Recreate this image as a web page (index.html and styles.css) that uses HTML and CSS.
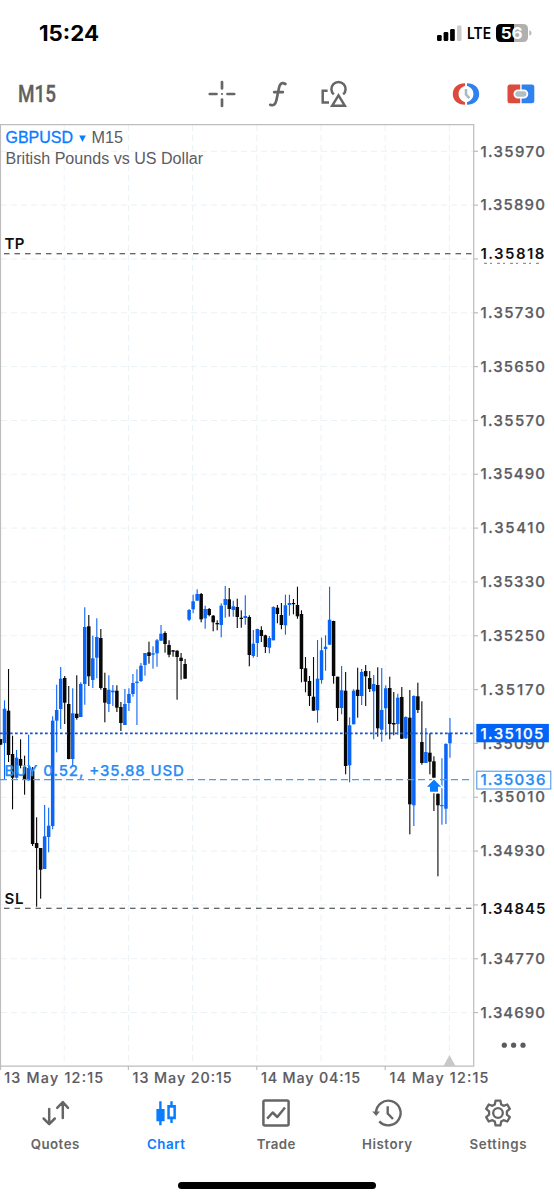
FILE: index.html
```html
<!DOCTYPE html>
<html lang="en">
<head>
<meta charset="utf-8">
<title>GBPUSD M15</title>
<link rel="stylesheet" href="styles.css">
</head>
<body>
<div class="screen">
  <header class="status">
    <svg class="clock" width="64" height="24"><text x="0" y="17.7" textLength="60" lengthAdjust="spacingAndGlyphs">15:24</text></svg>
    <div class="status-right">
      <svg width="25" height="16" viewBox="0 0 25 16">
        <rect x="0" y="10" width="4.7" height="6" rx="1.3"/>
        <rect x="6.6" y="7" width="4.7" height="9" rx="1.3"/>
        <rect x="13.1" y="4" width="4.7" height="12" rx="1.3"/>
        <rect x="20" y="0.5" width="4.5" height="15.5" rx="1.3" fill="#ccc"/>
      </svg>
      <svg class="lte" width="24" height="20"><text x="0" y="16.3" textLength="24" lengthAdjust="spacingAndGlyphs">LTE</text></svg>
      <svg class="battery" width="36" height="18" viewBox="0 0 36 18">
        <path d="M5 0H18V18H5Q0 18 0 13V5Q0 0 5 0Z"/>
        <path d="M18 0H27Q32 0 32 5V13Q32 18 27 18H18Z" fill="#b0b0b0"/>
        <path d="M33.3 6.3Q35.6 7 35.6 9T33.3 11.7Z" fill="#b8b8b8"/>
        <text x="4.7" y="15" textLength="22" lengthAdjust="spacingAndGlyphs">56</text>
      </svg>
    </div>
  </header>

  <nav class="toolbar">
    <svg class="frame" width="40" height="24"><text x="0" y="20" textLength="38" lengthAdjust="spacingAndGlyphs">M15</text></svg>
    <div class="tools">
      <svg width="28" height="28" viewBox="0 0 28 28" fill="none" stroke="#666" stroke-width="2.7" stroke-linecap="round">
        <path d="M14 2V8.5M14 19.5V26M1.8 14H8.5M19.5 14H26.2"/><circle cx="14" cy="14" r="1.1" fill="#666" stroke="none"/>
      </svg>
      <svg width="20" height="28" viewBox="0 0 20 28" fill="none" stroke="#666" stroke-width="2.7" stroke-linecap="round">
        <path d="M17.5 4C14 2.2 12 3.6 11.2 7L8.4 20.3C7.4 24.8 5.4 26 2.2 24.8M6.2 12.2H14.8"/>
      </svg>
      <svg width="28" height="28" viewBox="0 0 28 28" fill="none" stroke="#666" stroke-width="2.5">
        <path d="M7.6 10.8H2.7V22.6H9"/><path d="M13.8 14.4A7.1 7.1 0 1 1 23.2 14.4"/><path d="M18.5 15.4L24.8 25.7H12.2Z"/>
      </svg>
    </div>
    <div class="trade-buttons">
      <svg width="28" height="24" viewBox="0 0 28 24">
        <path d="M13 1.2C5.7 1.2 .8 5.7 .8 12S5.7 22.8 13 22.8V20.2C8.6 18.4 6.6 15.8 6.6 12S8.6 5.6 13 3.8Z" fill="#dc493d"/>
        <path d="M15 1.2C22.3 1.2 27.2 5.7 27.2 12S22.3 22.8 15 22.8V20.2C19.4 18.4 21.4 15.8 21.4 12S19.4 5.6 15 3.8Z" fill="#2e81ee"/>
        <path d="M14 7V12.6L17.4 16.2" fill="none" stroke="#a9b8c4" stroke-width="2.6"/>
      </svg>
      <svg width="28" height="24" viewBox="0 0 28 24">
        <path d="M3 2.5H13.2V21.3H3Q.5 21.3 .5 18.8V5Q.5 2.5 3 2.5Z" fill="#dc493d"/>
        <path d="M14.6 2.5H24.8Q27.3 2.5 27.3 5V18.8Q27.3 21.3 24.8 21.3H14.6Z" fill="#2e81ee"/>
        <rect x="7.4" y="8.4" width="13" height="7.2" rx="3.6" fill="#b0bec5" stroke="#fff" stroke-width="1.8"/>
      </svg>
    </div>
  </nav>

  <main class="chart">
    <svg id="plot" width="554" height="970" viewBox="0 120 554 970">
      <g id="grid" class="grid"></g>
      <path class="frame-line" d="M0 124.7H473.7V1066.2H0M.5 124.7V1070"/>
      <g id="ticks" class="frame-line"></g>
      <path d="M449.5 1055L455.5 1066H443.5Z" fill="#c8c8c8"/>
      <g id="candles"></g>
      <path class="level" d="M4 253.7H473M4 908.3H473"/>
      <path class="open-line" d="M0 779.7H473"/>
      <path class="bid-line" d="M0 733.4H473"/>
      <path d="M434 779.6L441 786.8H438V791.8H430V786.8H427Z" fill="#0a7cff" stroke="#fff" stroke-width="3" paint-order="stroke"/>
      <g id="labels"></g>
      <g class="price strong">
        <text x="4.4" y="249" textLength="20">TP</text>
        <text x="4.4" y="904" textLength="19">SL</text>
      </g>
      <text class="price position" x="4.4" y="775.5" textLength="179.5">BUY 0.52, +35.88 USD</text>
      <path d="M484 263.3H542" stroke="#777" stroke-width="1" stroke-dasharray="3 3 2 5"/>
      <g class="price strong">
        <text x="480.4" y="258.9" textLength="64">1.35818</text>
        <text x="480.4" y="913.5" textLength="65">1.34845</text>
      </g>
      <rect x="476.3" y="723.9" width="72.6" height="18.4" fill="#0064f8"/>
      <text class="price bid" x="480.4" y="738.8" textLength="63">1.35105</text>
      <rect x="476.8" y="771.2" width="74" height="17.8" fill="#fff" stroke="#3c91ee"/>
      <text class="price position" x="480.4" y="785.2" textLength="65">1.35036</text>
      <g fill="#5b5b62"><circle cx="504.3" cy="1045.2" r="2.6"/><circle cx="513.6" cy="1045.2" r="2.6"/><circle cx="523" cy="1045.2" r="2.6"/></g>
      <g class="title">
        <text class="symbol" x="5.5" y="143.4" textLength="67.5" lengthAdjust="spacingAndGlyphs">GBPUSD</text>
        <path d="M79.2 135.4H85.8L82.5 142Z" fill="#0a7cff"/>
        <text x="91.5" y="143.4" textLength="31.5" lengthAdjust="spacingAndGlyphs">M15</text>
        <text x="5.5" y="163.5" textLength="197.5" lengthAdjust="spacingAndGlyphs">British Pounds vs US Dollar</text>
      </g>
    </svg>
  </main>

  <footer class="tabs">
    <a class="tab">
      <svg width="28" height="28" viewBox="0 0 28 28" fill="none" stroke="#666" stroke-width="2.5" stroke-linecap="round" stroke-linejoin="round">
        <path d="M8.2 10V25M2.6 19.5L8.2 25.2L13.8 19.5M21.8 19V3.2M16.2 8.8L21.8 3L27 8.8"/>
      </svg>
      <svg class="label" width="60" height="16"><text x="30" y="12" textLength="48.5">Quotes</text></svg>
    </a>
    <a class="tab active">
      <svg width="28" height="28" viewBox="0 0 28 28" fill="#0a7cff">
        <path d="M7.2 2.3H9.6V10H12.6V22.3H9.6V26.3H7.2V22.3H4.4V10H7.2Z"/>
        <path d="M18.3 2.3H20.7V6H23.9V20.3H20.7V24H18.3V20.3H15.3V6H18.3ZM17.8 8.7V17.6H21.4V8.7Z" fill-rule="evenodd"/>
      </svg>
      <svg class="label" width="60" height="16"><text x="30" y="12" textLength="38">Chart</text></svg>
    </a>
    <a class="tab">
      <svg width="28" height="28" viewBox="0 0 28 28" fill="none" stroke="#666" stroke-width="2.5" stroke-linejoin="round">
        <rect x="1.4" y="1.4" width="25.2" height="25" rx="1.5"/><path d="M5.2 19.6L10.7 13.5L15.3 18L23 8.5"/>
      </svg>
      <svg class="label" width="60" height="16"><text x="30" y="12" textLength="38.5">Trade</text></svg>
    </a>
    <a class="tab">
      <svg width="28" height="28" viewBox="0 0 28 28" fill="none" stroke="#666" stroke-width="2.4">
        <path d="M3 14A12.3 12.3 0 1 1 6.3 22.4"/><path d="M-.8 12.4H6.9L3.2 17Z" fill="#666" stroke="none"/><path d="M14.7 7.2V14.5L20 20"/>
      </svg>
      <svg class="label" width="60" height="16"><text x="30" y="12" textLength="50">History</text></svg>
    </a>
    <a class="tab">
      <svg width="28" height="28" viewBox="0 0 28 28" fill="none" stroke="#666" stroke-width="2.3" stroke-linejoin="round">
        <path d="M11.6 1.6H16.4L17.2 5.4L19.6 6.8L23.3 5.5L25.8 9.8L22.9 12.4V15.6L25.8 18.2L23.3 22.5L19.6 21.2L17.2 22.6L16.4 26.4H11.6L10.8 22.6L8.4 21.2L4.7 22.5L2.2 18.2L5.1 15.6V12.4L2.2 9.8L4.7 5.5L8.4 6.8L10.8 5.4Z"/><circle cx="14" cy="14" r="4.8"/>
      </svg>
      <svg class="label" width="60" height="16"><text x="30" y="12" textLength="57">Settings</text></svg>
    </a>
  </footer>
  <div class="home"></div>
</div>
<script src="chart.js"></script>
</body>
</html>
```
FILE: styles.css
```css
body {
  margin: 0;
  background: #fff;
  font-family: Inter, "Noto Sans", sans-serif;
}
svg { display: block; flex: none; overflow: visible; }
.screen {
  width: 554px;
  height: 1199px;
  display: flex;
  flex-direction: column;
  overflow: hidden;
}
.status {
  height: 66px;
  box-sizing: border-box;
  padding: 23px 22px 0 38.5px;
  display: flex;
  justify-content: space-between;
}
.clock text { font-size: 21px; font-weight: 700; }
.status-right {
  height: 20px;
  display: flex;
  align-items: center;
  gap: 5px;
}
.lte text { font-size: 16.5px; font-weight: 600; }
.battery text { font-size: 16.5px; font-weight: 700; fill: #fff; }
.toolbar {
  height: 54px;
  box-sizing: border-box;
  padding: 1px 19.5px 0 18px;
  display: flex;
  align-items: center;
  justify-content: space-between;
}
.frame text { font-family: Roboto, sans-serif; font-size: 23px; font-weight: 500; fill: #606060; stroke: #606060; stroke-width: .3; }
.tools {
  display: flex;
  gap: 32px;
  margin-left: 45.5px;
}
.trade-buttons { display: flex; gap: 27px; }
.chart { height: 970px; }
.grid path { stroke: #eaf2f6; stroke-width: 1; stroke-dasharray: 6 4; fill: none; }
.frame-line { stroke: #bdbdbd; stroke-width: 1.2; fill: none; }
.level { stroke: #333; stroke-width: 1.1; stroke-dasharray: 5.5 5; }
.open-line { stroke: #4a9fe8; stroke-width: 1.2; stroke-dasharray: 7 4; }
.bid-line { stroke: #1453cf; stroke-width: 1.6; stroke-dasharray: 2.7 2.3; }
.price { font-size: 15px; font-weight: 500; stroke-width: .25; }
.axis { fill: #5b5b62; stroke: #5b5b62; }
.strong { fill: #111; font-weight: 600; }
.position { fill: #288cf5; stroke: #288cf5; }
.bid { fill: #fff; stroke: #fff; }
.date { font-size: 14.3px; font-weight: 500; fill: #5b5b62; stroke: #5b5b62; stroke-width: .15; }
.title { font-family: "Liberation Sans", Arial, sans-serif; font-size: 16px; fill: #5b5b62; }
.symbol { fill: #0a7cff; stroke: #0a7cff; stroke-width: .3; }
.tabs {
  display: grid;
  grid-template-columns: repeat(5, 110.6px);
  padding-top: 9px;
  height: 91.5px;
  box-sizing: border-box;
}
.tab {
  display: flex;
  flex-direction: column;
  align-items: center;
  gap: 9.5px;
}
.label text { font-size: 13.3px; font-weight: 600; text-anchor: middle; fill: #666; }
.active .label text { fill: #0a7cff; }
.home {
  width: 198px;
  height: 7px;
  border-radius: 4px;
  background: #000;
  margin: 0 auto;
}
```
FILE: chart.js
```js
// Each candle: high, body top, body bottom, low; u = rising, d = falling.
const candles = `d 739 739 744.7 744.7
u 700.3 708.7 743 779.7
d 669 710.7 755 762
d 735.7 754 777.7 809.3
u 750 757.7 777.7 778.5
d 739.3 759 765.7 768.3
d 755.7 767 780 794.7
u 734.7 768 780.3 780.7
d 767 771 844 846
d 817.3 843 848 906.7
d 848 848 869.7 898.7
u 805 836.3 869 869
u 807.7 825.7 837 852.3
u 716.3 720.7 826 829.3
u 684.7 710 720.7 752.3
u 667 678.7 709 729
d 676 678 702.7 724
d 686 704 759 759.3
u 688.3 713.3 759 766.7
d 675.3 713.7 718 719.7
u 682.3 684 717 717
u 607.3 627 684 704.7
d 615 626.3 676.3 686
u 635.7 658.3 680 688
u 618.3 637 657.7 678.3
d 629 638 688 689.7
d 672.7 688 702.7 722.3
u 675.3 689.7 704 712
u 685 690.7 692.3 706
d 685.3 690.7 707.7 712
d 702 707 723 731
u 689 704 725 725
u 688.3 694 703 711
u 674 683 694 696.7
u 669.3 681.7 683 725
u 663 665.7 681 682
u 653 653 665 675.7
d 641.7 652.3 656 663.7
u 646.3 653.3 654.7 668.7
u 639 640.3 653.3 666.7
u 625 633.7 640.7 641
d 631.3 633 644 652.7
d 640.3 645 654.7 657.3
d 650 650.3 651.7 656.7
d 650.3 650.7 657 699.7
d 653 657.7 661 679.7
d 659 664 678.7 678.7
u 609 610 619.7 621
u 594.7 601.3 609.3 613.3
u 589.3 594 600.7 600.7
d 593 594 619.3 622.3
u 605.7 609 618.3 628.7
d 608 609 615 616.3
d 615 615.7 622.3 631.3
d 620.3 623 624.3 630.3
u 603.3 605.7 625 637.3
u 586 599 605 617.7
d 588 599.3 609 616.7
u 600.7 606.3 610 616.7
d 598.7 607 617 628
d 610.3 617.7 619 627.7
u 595.3 616 618 624.7
d 615.3 617 655 666.3
u 630 643.7 656 657.7
u 628.7 629 643 657
d 626.3 630 636 642
d 634.7 635.3 647 653
u 636 638 647.7 653.3
u 606.3 607 640.3 640.3
d 605 607.7 614 623.3
d 603 615 625 629.3
u 594.7 605.3 625.3 634.7
u 594.7 603 605 615.7
d 599 603 604.2 614.3
d 586.7 605 616.3 618.7
d 610.3 614 669 682.3
d 657 668.3 681.7 692.3
d 676 681 696 706
d 657 696.7 710.7 710.7
u 640 678.7 710.3 722.7
u 637.7 650.3 680 683.7
u 635.3 646.7 649 670.7
u 586.7 619.7 644.7 645
d 620.7 621 676 683.7
d 676.7 676.7 708 721
u 666 690.3 708 714.3
d 672 690.7 766 774.3
u 717.3 725.3 765.3 782.3
u 689.3 690.7 724.3 724.3
d 667.7 689.7 696 717.7
u 669 672 696 705
d 665 671 676.3 706
d 671 678 689 692
u 675 684 691.3 739.3
d 667.3 685 728.3 736.7
u 668 710 729.7 741.7
u 685.3 688.3 708.3 735.3
d 676.7 688 724 739.3
d 692 723 724.5 735.3
u 693.7 697.7 724 734.7
d 687 697 738.7 739
u 716.3 717 738.3 739
d 690 717.7 804.3 834.3
u 695.3 696 805.3 826
d 682.7 696.3 710 713
d 701.3 742 763 764.7
u 728 752 763 763
d 733.3 752.7 761.7 774.3
d 756.3 761.3 777.7 811
d 793.3 793.7 805.3 876.3
u 758.3 805 805.8 824.7
u 743.3 744 808.7 824
u 718 732.7 743.3 757.7`.split("\n").map(line => line.split(" "));

const FIRST_X = 0.5, STEP = 4.013;
let out = "";
candles.forEach(([dir, hi, top, bottom, lo], i) => {
  const x = FIRST_X + i * STEP;
  const fill = dir === "u" ? "#0a64f5" : "#080808";
  out += `<rect x="${(x - 0.55).toFixed(2)}" y="${hi}" width="1.1" height="${lo - hi}" fill="${fill}"/>`;
  out += `<rect x="${(x - 1.75).toFixed(2)}" y="${top}" width="3.5" height="${Math.max(bottom - top, 1.2)}" fill="${fill}"/>`;
});
document.getElementById("candles").innerHTML = out;

// Price axis: one row every 80 points. Rows hidden by a level label keep only the grid line.
const covered = new Set([2, 14]);
let grid = "", ticks = "", labels = "";
for (let i = 0; i <= 16; i++) {
  const y = 151.3 + i * 53.83;
  grid += `<path d="M1 ${y}H473"/>`;
  ticks += `<path d="M474 ${y}H478"/>`;
  if (!covered.has(i)) {
    const price = ((135970 - i * 80) / 100000).toFixed(5);
    labels += `<text class="price axis" x="480.4" y="${y + 5.2}" textLength="64.5">${price}</text>`;
  }
}

["13 May 12:15", "13 May 20:15", "14 May 04:15", "14 May 12:15"].forEach((date, i) => {
  const x = i * 128.4;
  labels += `<text class="date" x="${x + 4.2}" y="1082.6" textLength="99">${date}</text>`;
  if (i) ticks += `<path d="M${x} 1066V1070"/>`;
});
for (let i = 1; i <= 7; i++) grid += `<path d="M${i * 64.2} 125V1066"/>`;

document.getElementById("grid").innerHTML = grid;
document.getElementById("ticks").innerHTML = ticks;
document.getElementById("labels").innerHTML = labels;
```
